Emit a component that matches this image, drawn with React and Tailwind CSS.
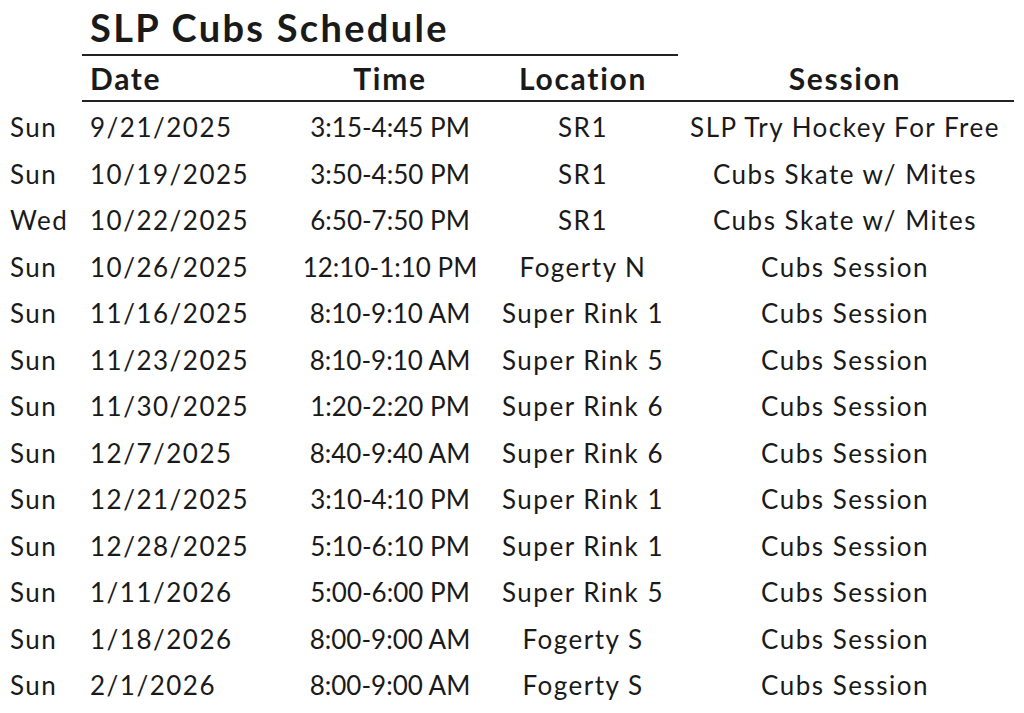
const rows = [
  ["Sun", "9/21/2025", "3:15-4:45 PM", "SR1", "SLP Try Hockey For Free"],
  ["Sun", "10/19/2025", "3:50-4:50 PM", "SR1", "Cubs Skate w/ Mites"],
  ["Wed", "10/22/2025", "6:50-7:50 PM", "SR1", "Cubs Skate w/ Mites"],
  ["Sun", "10/26/2025", "12:10-1:10 PM", "Fogerty N", "Cubs Session"],
  ["Sun", "11/16/2025", "8:10-9:10 AM", "Super Rink 1", "Cubs Session"],
  ["Sun", "11/23/2025", "8:10-9:10 AM", "Super Rink 5", "Cubs Session"],
  ["Sun", "11/30/2025", "1:20-2:20 PM", "Super Rink 6", "Cubs Session"],
  ["Sun", "12/7/2025", "8:40-9:40 AM", "Super Rink 6", "Cubs Session"],
  ["Sun", "12/21/2025", "3:10-4:10 PM", "Super Rink 1", "Cubs Session"],
  ["Sun", "12/28/2025", "5:10-6:10 PM", "Super Rink 1", "Cubs Session"],
  ["Sun", "1/11/2026", "5:00-6:00 PM", "Super Rink 5", "Cubs Session"],
  ["Sun", "1/18/2026", "8:00-9:00 AM", "Fogerty S", "Cubs Session"],
  ["Sun", "2/1/2026", "8:00-9:00 AM", "Fogerty S", "Cubs Session"],
];

export default function App() {
  return (
    <div
      className="w-[1024px] h-[713px] bg-white text-[#1a1a1a] overflow-hidden"
      style={{ fontFamily: "Lato, 'Open Sans', sans-serif" }}
    >
      {/* titel */}
      <div className="pl-[82px] pt-[6px]">
        <div className="w-[596px] border-b-2 border-[#222] pl-[8px] h-[50px] flex items-end pb-[8px]">
          <h1 className="text-[38px] font-bold leading-none tracking-[2.3px]">SLP Cubs Schedule</h1>
        </div>
      </div>

      {/* kop */}
      <div className="flex pl-[82px]">
        <div className="grid grid-cols-[218px_180px_198px_334px] w-[932px] h-[46px] items-center border-b-2 border-[#222] text-[30px] font-bold leading-none tracking-[1.7px]">
          <div className="pl-[8px]">Date</div>
          <div className="text-center">Time</div>
          <div className="text-center pl-[8px]">Location</div>
          <div className="text-center">Session</div>
        </div>
      </div>

      {/* rijen */}
      <div className="pt-[2px] text-[26px] leading-none tracking-[1.5px] whitespace-nowrap">
        {rows.map((r, i) => (
          <div key={i} className="grid grid-cols-[82px_218px_180px_198px_334px] h-[46.5px] items-center">
            <div className="pl-[10px]">{r[0]}</div>
            <div className="pl-[8px]">{r[1]}</div>
            <div className="text-center tracking-normal">{r[2]}</div>
            <div className="text-center pl-[8px]">{r[3]}</div>
            <div className="text-center">{r[4]}</div>
          </div>
        ))}
      </div>
    </div>
  );
}
